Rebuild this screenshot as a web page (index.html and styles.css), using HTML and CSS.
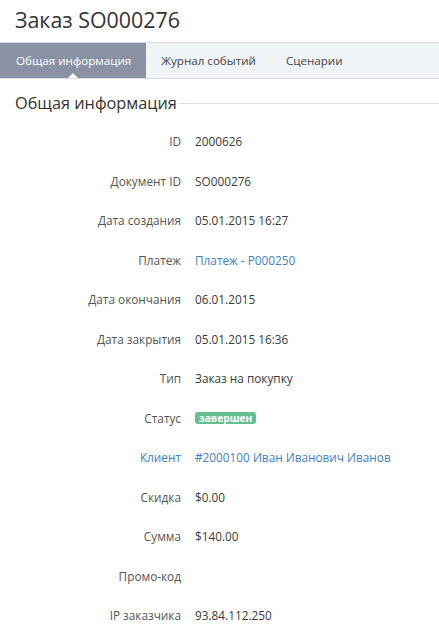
FILE: index.html
```html
<!DOCTYPE html>
<html lang="ru">
<head>
<meta charset="utf-8">
<link rel="stylesheet" href="styles.css">
</head>
<body>
<h1 class="title">Заказ SO000276</h1>
<nav class="tabs">
  <a class="tab tab-active">Общая информация</a>
  <a class="tab">Журнал событий</a>
  <a class="tab">Сценарии</a>
</nav>
<div class="section">
  <h2 class="section-title"><span>Общая информация</span></h2>
  <dl class="fields">
    <div class="row"><dt>ID</dt><dd>2000626</dd></div>
    <div class="row"><dt>Документ ID</dt><dd>SO000276</dd></div>
    <div class="row"><dt>Дата создания</dt><dd>05.01.2015 16:27</dd></div>
    <div class="row"><dt>Платеж</dt><dd><a class="link">Платеж - P000250</a></dd></div>
    <div class="row"><dt>Дата окончания</dt><dd>06.01.2015</dd></div>
    <div class="row"><dt>Дата закрытия</dt><dd>05.01.2015 16:36</dd></div>
    <div class="row"><dt>Тип</dt><dd>Заказ на покупку</dd></div>
    <div class="row"><dt>Статус</dt><dd><span class="badge">завершен</span></dd></div>
    <div class="row"><dt class="dt-link">Клиент</dt><dd><a class="link">#2000100 Иван Иванович Иванов</a></dd></div>
    <div class="row"><dt>Скидка</dt><dd>$0.00</dd></div>
    <div class="row"><dt>Сумма</dt><dd>$140.00</dd></div>
    <div class="row"><dt>Промо-код</dt><dd></dd></div>
    <div class="row"><dt>IP заказчика</dt><dd>93.84.112.250</dd></div>
  </dl>
</div>
</body>
</html>
```
FILE: styles.css
```css
html, body {
  margin: 0;
  padding: 0;
  background: #fff;
}
body {
  font-family: "Open Sans", "Liberation Sans", sans-serif;
  color: #333;
  font-size: 11.8px;
}
.title {
  margin: 0;
  padding: 5px 15px 0;
  height: 37px;
  font-size: 21.4px;
  font-weight: 400;
  line-height: 30px;
  color: #333;
}
.tabs {
  display: flex;
  height: 35px;
  background: #f1f4f7;
  border-top: 1px solid #d9dde2;
  border-bottom: 1px solid #d9dde2;
}
.tab {
  position: relative;
  display: flex;
  align-items: center;
  padding: 0 15px;
  font-size: 11.6px;
  color: #444;
  cursor: pointer;
}
.tab-active {
  background: #8892a3;
  color: #fff;
  padding: 0 15px 0 16px;
}
.tab-active::after {
  content: "";
  position: absolute;
  left: 50%;
  bottom: 0;
  margin-left: -5px;
  border-left: 5px solid transparent;
  border-right: 5px solid transparent;
  border-bottom: 5px solid #fff;
}
.section {
  padding: 0 0 0 15px;
}
.section-title {
  margin: 13px 0 0;
  display: flex;
  align-items: center;
  font-size: 16.3px;
  font-weight: 400;
  color: #333;
  line-height: 22px;
}
.section-title::after {
  content: "";
  flex: 1;
  height: 1px;
  background: #d9dde2;
  margin-left: 2px;
}
.fields {
  margin: 18px 0 0;
}
.row {
  display: flex;
  height: 39.5px;
  align-items: flex-start;
}
.row dt {
  width: 166px;
  text-align: right;
  color: #555;
  line-height: 18px;
}
.row dd {
  margin: 0 0 0 14px;
  line-height: 18px;
  color: #3a3a3a;
}
.dt-link {
  color: #3f7fc2 !important;
}
.link {
  color: #3f7fc2;
  cursor: pointer;
}
.badge {
  display: inline-block;
  background: #63c08e;
  color: #fff;
  font-weight: 700;
  font-size: 10.2px;
  line-height: 12px;
  padding: 0 4px;
  border-radius: 3px;
  vertical-align: 1px;
}
```
